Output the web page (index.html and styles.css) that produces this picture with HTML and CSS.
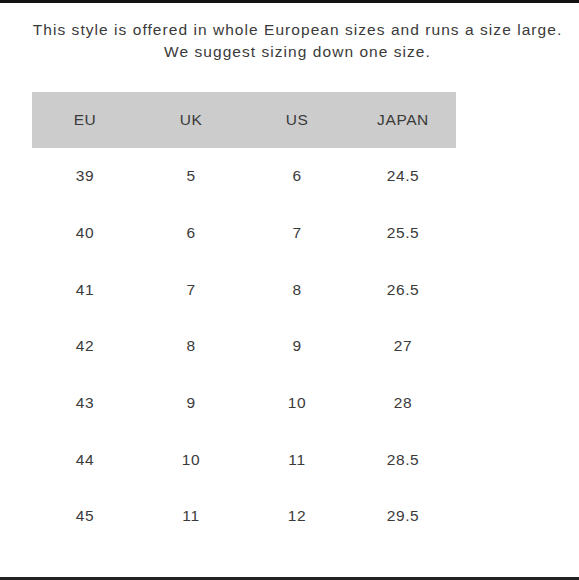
FILE: index.html
```html
<!DOCTYPE html>
<html>
<head>
<meta charset="utf-8">
<link rel="stylesheet" href="styles.css">
</head>
<body>
<div class="page">
  <p class="note">This style is offered in whole European sizes and runs a size large.<br>We suggest sizing down one size.</p>
  <table class="sizes">
    <thead>
      <tr><th>EU</th><th>UK</th><th>US</th><th>JAPAN</th></tr>
    </thead>
    <tbody>
      <tr><td>39</td><td>5</td><td>6</td><td>24.5</td></tr>
      <tr><td>40</td><td>6</td><td>7</td><td>25.5</td></tr>
      <tr><td>41</td><td>7</td><td>8</td><td>26.5</td></tr>
      <tr><td>42</td><td>8</td><td>9</td><td>27</td></tr>
      <tr><td>43</td><td>9</td><td>10</td><td>28</td></tr>
      <tr><td>44</td><td>10</td><td>11</td><td>28.5</td></tr>
      <tr><td>45</td><td>11</td><td>12</td><td>29.5</td></tr>
    </tbody>
  </table>
</div>
</body>
</html>
```
FILE: styles.css
```css
html, body {
  margin: 0;
  padding: 0;
  background: #fff;
}
.page {
  box-sizing: border-box;
  width: 579px;
  height: 580px;
  border-top: 3px solid #111;
  border-bottom: 3px solid #222;
  font-family: "Liberation Sans", Arial, sans-serif;
  color: #3a3a3a;
  padding: 16px 0 0 16px;
}
.note {
  margin: 0;
  text-align: center;
  font-size: 15.5px;
  line-height: 22px;
  letter-spacing: 1.05px;
}
.sizes {
  margin: 29px 0 0 16px;
  width: 424px;
  border-collapse: collapse;
  table-layout: fixed;
  font-size: 15.5px;
  letter-spacing: 0.6px;
}
.sizes th {
  background: #cccccc;
  font-weight: normal;
  height: 56px;
  padding: 0;
  text-align: center;
}
.sizes td {
  height: 56.7px;
  padding: 0;
  text-align: center;
}
```
